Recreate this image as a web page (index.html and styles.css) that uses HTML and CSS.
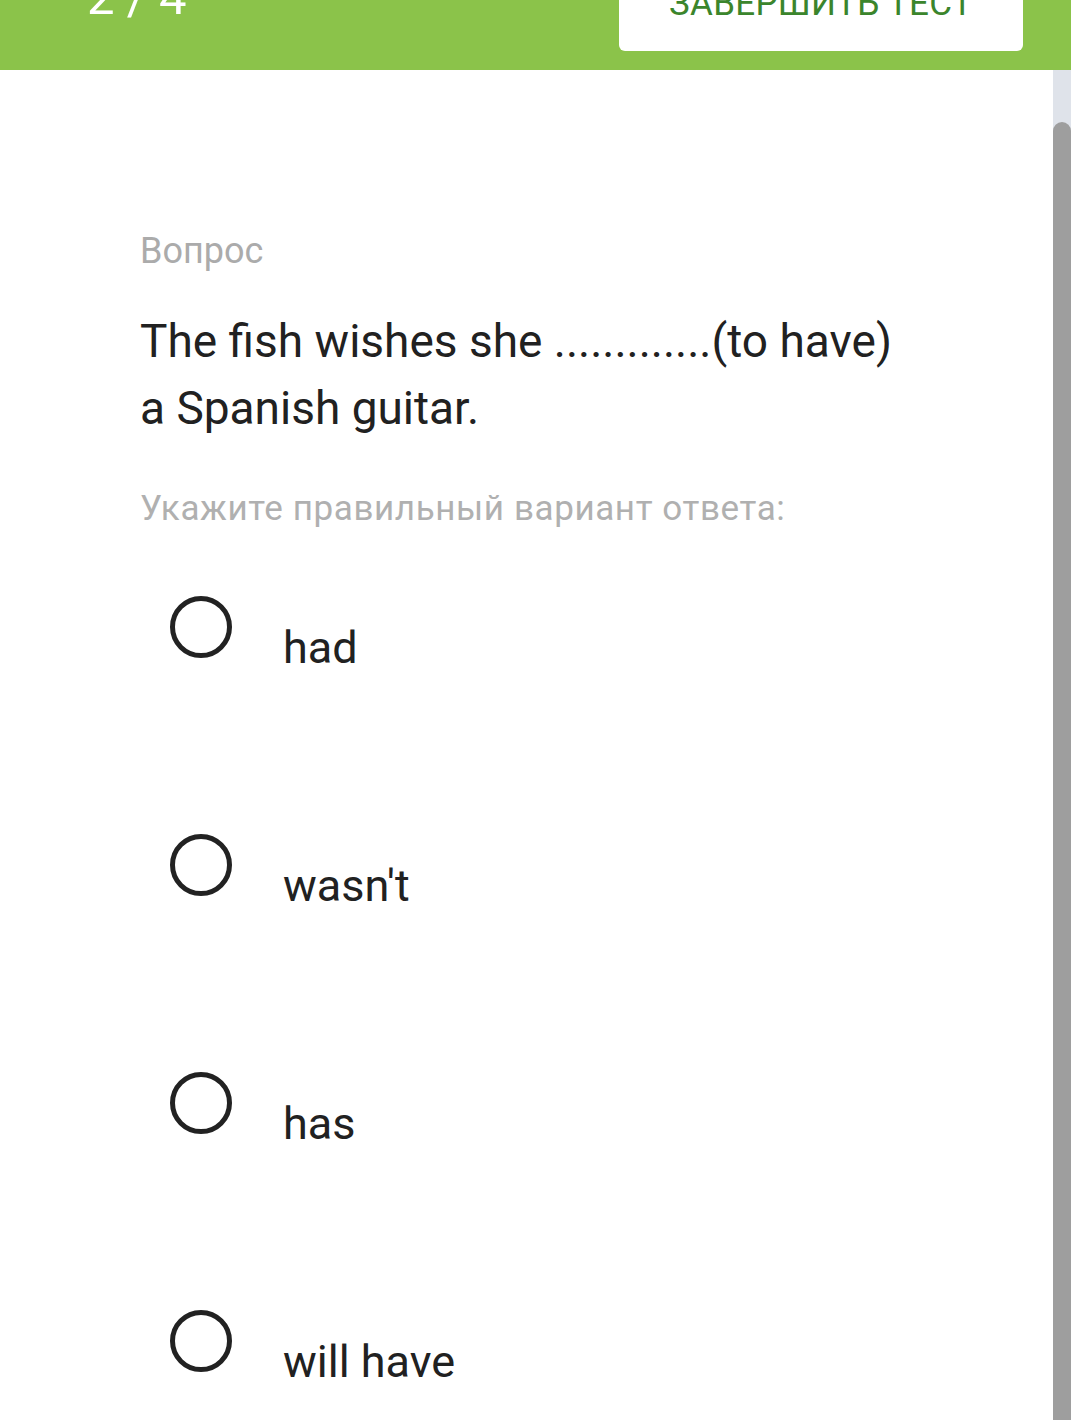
FILE: index.html
```html
<!DOCTYPE html>
<html lang="ru">
<head>
<meta charset="utf-8">
<title>Тест</title>
<link rel="stylesheet" href="styles.css">
</head>
<body>
<header class="topbar">
  <div class="counter">2 / 4</div>
  <div class="finish-btn"><span>ЗАВЕРШИТЬ ТЕСТ</span></div>
</header>
<div class="page">
  <main class="content">
    <div class="label">Вопрос</div>
    <div class="question">The fish wishes she .............(to have) a Spanish guitar.</div>
    <div class="hint">Укажите правильный вариант ответа:</div>
    <div class="options">
      <div class="option"><span class="radio"></span><span class="option-text">had</span></div>
      <div class="option"><span class="radio"></span><span class="option-text">wasn't</span></div>
      <div class="option"><span class="radio"></span><span class="option-text">has</span></div>
      <div class="option"><span class="radio"></span><span class="option-text">will have</span></div>
    </div>
  </main>
  <div class="scrollbar"><div class="thumb"></div></div>
</div>
</body>
</html>
```
FILE: styles.css
```css
* { box-sizing: border-box; }
html, body { margin: 0; padding: 0; height: 100%; overflow: hidden; }
body {
  font-family: Roboto, "Noto Sans", sans-serif;
  background: #ffffff;
  color: #212121;
  display: flex;
  flex-direction: column;
}
.topbar {
  flex: none;
  height: 70px;
  background: #8bc34a;
  display: flex;
  justify-content: space-between;
  align-items: flex-start;
  padding: 0 48px 0 87px;
  overflow: hidden;
}
.counter {
  margin-top: -30px;
  font-size: 49px;
  line-height: 56px;
  color: #ffffff;
}
.finish-btn {
  margin-top: -49px;
  width: 404px;
  height: 100px;
  background: #ffffff;
  border-radius: 6px;
  display: flex;
  justify-content: center;
  padding-top: 33px;
  font-size: 35px;
  line-height: 40px;
  color: #3b852c;
  letter-spacing: 0.3px;
}
.page {
  flex: 1;
  display: flex;
  min-height: 0;
}
.content {
  flex: 1;
  padding-left: 140px;
  padding-top: 161px;
}
.label {
  font-size: 36px;
  line-height: 40px;
  color: #ababab;
}
.question {
  margin-top: 37px;
  font-size: 46px;
  line-height: 67px;
  width: 770px;
  color: #212121;
}
.hint {
  margin-top: 47px;
  font-size: 35px;
  line-height: 40px;
  letter-spacing: 0.6px;
  color: #b0b0b0;
}
.options {
  margin-top: 37px;
  display: flex;
  flex-direction: column;
}
.option {
  height: 238px;
  display: flex;
  align-items: flex-start;
  padding-left: 30px;
}
.radio {
  flex: none;
  margin-top: 30px;
  width: 62px;
  height: 62px;
  border: 5.5px solid #222222;
  border-radius: 50%;
}
.option-text {
  margin-left: 51px;
  margin-top: 56px;
  font-size: 45px;
  line-height: 52px;
  color: #212121;
}
.scrollbar {
  flex: none;
  width: 18px;
  background: #dfe3ea;
  padding-top: 52px;
  display: flex;
  flex-direction: column;
}
.thumb {
  flex: 1;
  background: #9e9e9e;
  border-radius: 9px 9px 0 0;
}
```
